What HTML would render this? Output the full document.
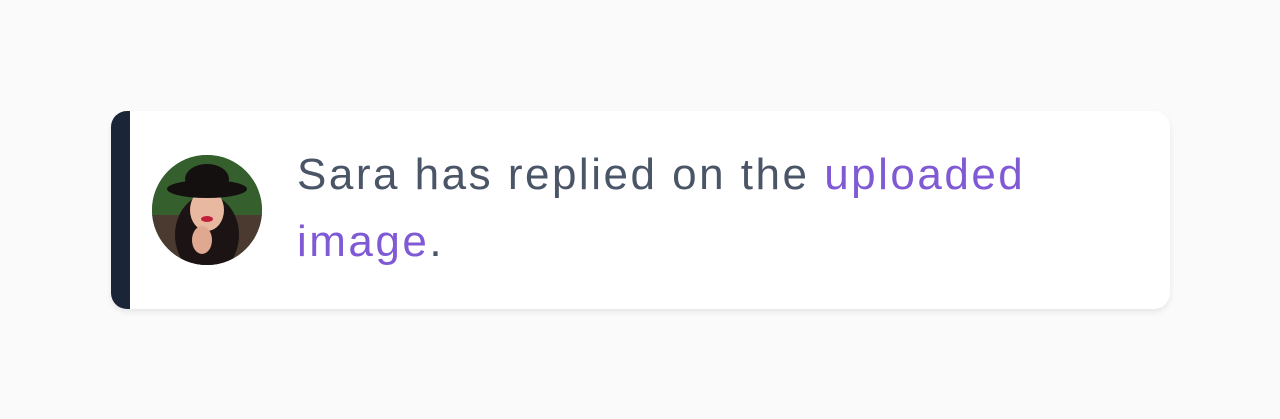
<!DOCTYPE html>
<html><head><style>
html,body{margin:0;padding:0;background:#fafafa;width:1280px;height:419px;overflow:hidden}
.card{position:absolute;left:111px;top:111px;width:1059px;height:198px;background:#fff;border-radius:16px;box-shadow:0 3px 6px rgba(0,0,0,0.08);overflow:hidden}
.bar{position:absolute;left:0;top:0;width:19px;height:100%;background:#1a2537}
.av{position:absolute;left:41px;top:44px;width:110px;height:110px;border-radius:50%;overflow:hidden;background:#2f5a2a}
.txt{position:absolute;left:186px;top:30px;width:820px;font-family:"Liberation Sans",sans-serif;font-size:44px;line-height:67px;letter-spacing:2.5px;color:#4a5568;white-space:nowrap}
.txt span{color:#805ad5}
</style></head><body>
<div class="card"><div class="bar"></div>
<div class="av"><svg width="110" height="110" viewBox="0 0 110 110">
<rect width="110" height="110" fill="#35602e"/>
<rect x="0" y="60" width="110" height="50" fill="#4a3a30"/>
<ellipse cx="55" cy="80" rx="32" ry="40" fill="#1c1414"/>
<ellipse cx="55" cy="55" rx="17" ry="21" fill="#e8b8a0"/>
<ellipse cx="55" cy="34" rx="40" ry="9" fill="#151010"/>
<ellipse cx="55" cy="24" rx="22" ry="15" fill="#151010"/>
<ellipse cx="55" cy="64" rx="6" ry="3" fill="#c0203a"/>
<ellipse cx="50" cy="85" rx="10" ry="14" fill="#e0a890"/>
</svg></div>
<div class="txt">Sara has replied on the <span>uploaded</span><br><span>image</span>.</div>
</div>
</body></html>
